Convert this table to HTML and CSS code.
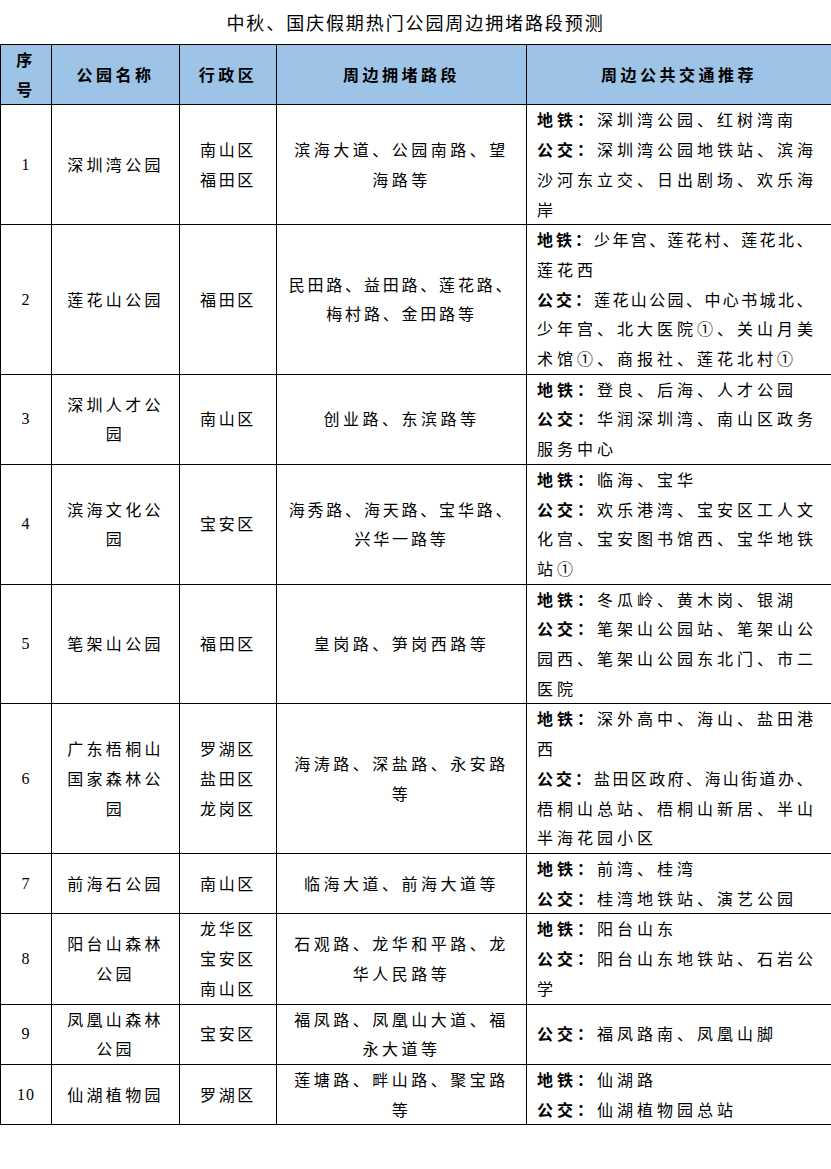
FILE: index.html
```html
<!DOCTYPE html>
<html lang="zh-CN">
<head>
<meta charset="utf-8">
<title>中秋、国庆假期热门公园周边拥堵路段预测</title>
<link rel="stylesheet" href="styles.css">
</head>
<body>
<h1 class="title">中秋、国庆假期热门公园周边拥堵路段预测</h1>
<table class="grid">
  <colgroup>
    <col class="c-num"><col class="c-name"><col class="c-dist"><col class="c-roads"><col class="c-bus">
  </colgroup>
  <thead>
    <tr>
      <th>序<br>号</th>
      <th>公园名称</th>
      <th>行政区</th>
      <th>周边拥堵路段</th>
      <th>周边公共交通推荐</th>
    </tr>
  </thead>
  <tbody>
    <tr>
      <td class="num">1</td>
      <td class="name">深圳湾公园</td>
      <td class="dist">南山区<br>福田区</td>
      <td class="roads">滨海大道、公园南路、望<br>海路等</td>
      <td class="bus"><b>地铁：</b>深圳湾公园、红树湾南<br><b>公交：</b>深圳湾公园地铁站、滨海<br>沙河东立交、日出剧场、欢乐海<br>岸</td>
    </tr>
    <tr>
      <td class="num">2</td>
      <td class="name">莲花山公园</td>
      <td class="dist">福田区</td>
      <td class="roads tight">民田路、益田路、莲花路、<br>梅村路、金田路等</td>
      <td class="bus"><span class="tight"><b>地铁：</b>少年宫、莲花村、莲花北、</span><br>莲花西<br><span class="tight"><b>公交：</b>莲花山公园、中心书城北、</span><br>少年宫、北大医院①、关山月美<br>术馆①、商报社、莲花北村①</td>
    </tr>
    <tr>
      <td class="num">3</td>
      <td class="name">深圳人才公<br>园</td>
      <td class="dist">南山区</td>
      <td class="roads">创业路、东滨路等</td>
      <td class="bus"><b>地铁：</b>登良、后海、人才公园<br><b>公交：</b>华润深圳湾、南山区政务<br>服务中心</td>
    </tr>
    <tr>
      <td class="num">4</td>
      <td class="name">滨海文化公<br>园</td>
      <td class="dist">宝安区</td>
      <td class="roads tight">海秀路、海天路、宝华路、<br>兴华一路等</td>
      <td class="bus"><b>地铁：</b>临海、宝华<br><b>公交：</b>欢乐港湾、宝安区工人文<br>化宫、宝安图书馆西、宝华地铁<br>站①</td>
    </tr>
    <tr>
      <td class="num">5</td>
      <td class="name">笔架山公园</td>
      <td class="dist">福田区</td>
      <td class="roads">皇岗路、笋岗西路等</td>
      <td class="bus"><b>地铁：</b>冬瓜岭、黄木岗、银湖<br><b>公交：</b>笔架山公园站、笔架山公<br>园西、笔架山公园东北门、市二<br>医院</td>
    </tr>
    <tr>
      <td class="num">6</td>
      <td class="name">广东梧桐山<br>国家森林公<br>园</td>
      <td class="dist">罗湖区<br>盐田区<br>龙岗区</td>
      <td class="roads">海涛路、深盐路、永安路<br>等</td>
      <td class="bus"><b>地铁：</b>深外高中、海山、盐田港<br>西<br><span class="tight"><b>公交：</b>盐田区政府、海山街道办、</span><br>梧桐山总站、梧桐山新居、半山<br>半海花园小区</td>
    </tr>
    <tr>
      <td class="num">7</td>
      <td class="name">前海石公园</td>
      <td class="dist">南山区</td>
      <td class="roads">临海大道、前海大道等</td>
      <td class="bus"><b>地铁：</b>前湾、桂湾<br><b>公交：</b>桂湾地铁站、演艺公园</td>
    </tr>
    <tr>
      <td class="num">8</td>
      <td class="name">阳台山森林<br>公园</td>
      <td class="dist">龙华区<br>宝安区<br>南山区</td>
      <td class="roads">石观路、龙华和平路、龙<br>华人民路等</td>
      <td class="bus"><b>地铁：</b>阳台山东<br><b>公交：</b>阳台山东地铁站、石岩公<br>学</td>
    </tr>
    <tr>
      <td class="num">9</td>
      <td class="name">凤凰山森林<br>公园</td>
      <td class="dist">宝安区</td>
      <td class="roads">福凤路、凤凰山大道、福<br>永大道等</td>
      <td class="bus"><b>公交：</b>福凤路南、凤凰山脚</td>
    </tr>
    <tr>
      <td class="num">10</td>
      <td class="name">仙湖植物园</td>
      <td class="dist">罗湖区</td>
      <td class="roads">莲塘路、畔山路、聚宝路<br>等</td>
      <td class="bus"><b>地铁：</b>仙湖路<br><b>公交：</b>仙湖植物园总站</td>
    </tr>
  </tbody>
</table>
</body>
</html>
```

FILE: styles.css
```css
html, body {
  margin: 0;
  padding: 0;
  background: #ffffff;
}

body {
  font-family: "Noto Sans CJK SC", "Noto Sans", sans-serif;
  color: #000000;
  width: 831px;
}

.title {
  margin: 0;
  height: 44px;
  line-height: 44px;
  font-size: 18px;
  font-weight: normal;
  text-align: center;
  letter-spacing: 1.9px;
  color: #000000;
}

.grid {
  border-collapse: collapse;
  table-layout: fixed;
  width: 831px;
  font-size: 16px;
  line-height: 29.7px;
}

.c-num { width: 51px; }
.c-name { width: 128px; }
.c-dist { width: 97px; }
.c-roads { width: 250px; }
.c-bus { width: 305px; }

.grid th,
.grid td {
  border: 1px solid #000000;
  padding: 0;
  vertical-align: middle;
  text-align: center;
  white-space: nowrap;
}

.grid th {
  background: #9dc3e6;
  font-weight: bold;
  letter-spacing: 3.5px;
}

.grid td.num {
  font-family: "Liberation Serif", serif;
  font-size: 16px;
  letter-spacing: 1px;
}

.grid td.name {
  letter-spacing: 3.3px;
}

.grid td.dist {
  letter-spacing: 2.7px;
}

.grid td.roads {
  letter-spacing: 3.5px;
}

.grid td.roads.tight {
  letter-spacing: 2.8px;
}

.grid td.bus {
  text-align: left;
  padding-left: 10px;
  letter-spacing: 4px;
}

.grid td.bus b {
  font-weight: bold;
  letter-spacing: 4px;
}

.grid td.bus .tight {
  letter-spacing: 2.4px;
}

.grid td.bus .tight b {
  letter-spacing: 3px;
}
```
